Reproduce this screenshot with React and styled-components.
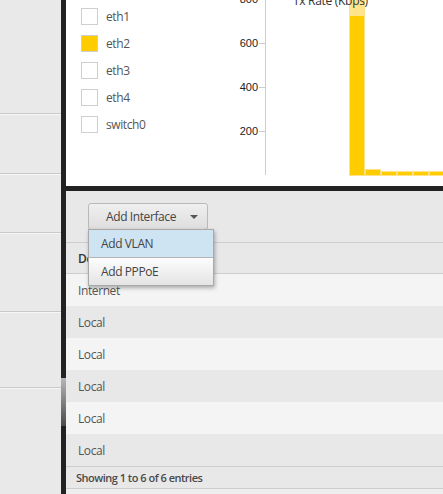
import React from 'react';
import styled, { createGlobalStyle } from 'styled-components';

const Global = createGlobalStyle`
  html, body { margin: 0; padding: 0; }
  body {
    width: 443px;
    height: 494px;
    overflow: hidden;
    font-family: "Open Sans", "Liberation Sans", sans-serif;
    letter-spacing: -0.4px;
    background: #e9e9e9;
  }
`;

const Layout = styled.div`
  display: flex;
  width: 443px;
  height: 494px;
`;

const Sidebar = styled.ul`
  width: 61px;
  margin: 0;
  padding: 0;
  list-style: none;
  background: #e9e9e9;
  display: flex;
  flex-direction: column;
`;

const NavItem = styled.li`
  height: ${p => p.h}px;
  flex: ${p => (p.fill ? 1 : 'none')};
  border-bottom: ${p => (p.fill ? 'none' : '1px solid #c9c9c9')};
  box-shadow: ${p => (p.fill ? 'none' : '0 1px 0 #f6f6f6')};
`;

const Rail = styled.div`
  width: 5px;
  background: #222;
  display: flex;
  flex-direction: column;
`;

const Thumb = styled.div`
  margin-top: 378px;
  height: 48px;
  background: linear-gradient(#b6b6b6, #4a4a4a);
`;

const Main = styled.div`
  flex: 1;
  display: flex;
  flex-direction: column;
  background: #222;
  gap: 5px;
`;

const TopPanel = styled.div`
  height: 186px;
  background: #fff;
  display: flex;
  overflow: hidden;
`;

const Legend = styled.ul`
  width: 149px;
  margin: 0;
  padding: 8px 0 0 15px;
  list-style: none;
  display: flex;
  flex-direction: column;
  gap: 10px;
`;

const LegendItem = styled.li`
  display: flex;
  align-items: center;
  gap: 8px;
  height: 17px;
  font-size: 12px;
  color: #555;
`;

const Swatch = styled.span`
  width: 15px;
  height: 15px;
  border: 1px solid #cfcfcf;
  background: ${p => (p.on ? '#ffcc00' : '#fff')};
`;

const BottomPanel = styled.div`
  flex: 1;
  background: #e8e8e8;
  display: flex;
  flex-direction: column;
`;

const Toolbar = styled.div`
  height: 51px;
  padding: 12px 0 0 22px;
  box-sizing: border-box;
  position: relative;
`;

const DropButton = styled.button`
  box-sizing: border-box;
  width: 120px;
  height: 27px;
  padding: 0 0 0 17px;
  display: flex;
  align-items: center;
  gap: 14px;
  white-space: nowrap;
  border: 1px solid #b9b9b9;
  border-radius: 3px;
  background: linear-gradient(#efefef, #dedede);
  font: 12px "Open Sans", sans-serif;
  letter-spacing: -0.4px;
  color: #444;
  cursor: pointer;
`;

const Caret = styled.span`
  width: 0;
  height: 0;
  border-left: 4px solid transparent;
  border-right: 4px solid transparent;
  border-top: 4px solid #555;
`;

const Menu = styled.ul`
  position: absolute;
  top: 38px;
  left: 22px;
  width: 124px;
  margin: 0;
  padding: 0;
  list-style: none;
  border: 1px solid #a9a9a9;
  background: #fff;
  box-shadow: 1px 2px 4px rgba(0, 0, 0, 0.3);
  z-index: 2;
`;

const MenuItem = styled.li`
  height: 27px;
  padding-left: 12px;
  display: flex;
  align-items: center;
  font-size: 12px;
  color: #444;
  background: ${p => (p.active ? '#cfe4f2' : 'linear-gradient(#fdfdfd, #e4e4e4)')};
  border-top: ${p => (p.active ? 'none' : '1px solid #b4b4b4')};
`;

const Table = styled.div`
  display: flex;
  flex-direction: column;
  border-top: 1px solid #cdcdcd;
`;

const HeadRow = styled.div`
  height: 30px;
  padding-left: 12px;
  display: flex;
  align-items: center;
  font-size: 12px;
  font-weight: 600;
  color: #333;
  border-bottom: 1px solid #cdcdcd;
`;

const Row = styled.div`
  height: 32px;
  padding-left: 12px;
  display: flex;
  align-items: center;
  font-size: 12px;
  color: #555;
  background: ${p => (p.odd ? '#f4f4f4' : '#e8e8e8')};
`;

const Footer = styled.div`
  height: 21px;
  padding-left: 10px;
  display: flex;
  align-items: center;
  font-size: 11px;
  font-weight: 600;
  letter-spacing: -0.5px;
  color: #4a4a4a;
  border-top: 1px solid #cdcdcd;
  border-bottom: 1px solid #cdcdcd;
`;

const Rest = styled.div`
  flex: 1;
  background: #eee;
`;

const ports = ['eth1', 'eth2', 'eth3', 'eth4', 'switch0'];
const rows = ['Internet', 'Local', 'Local', 'Local', 'Local', 'Local'];

// bar chart, x measured from the chart's left edge
const bars = [
  { x: 119, top: 0 },
  { x: 135, top: 169 },
  { x: 151, top: 171 },
  { x: 167, top: 171 },
  { x: 183, top: 171 },
  { x: 199, top: 171 },
];

const RateChart = () => (
  <svg width="213" height="186" style={{ display: 'block', letterSpacing: 0 }}>
    <line x1="35.5" y1="0" x2="35.5" y2="175" stroke="#ccc" />
    {[-1, 43, 87, 131].map(y => (
      <g key={y}>
        <line x1="29" y1={y + 0.5} x2="35" y2={y + 0.5} stroke="#ccc" />
        <text x="28" y={y + 4} textAnchor="end" fontSize="11" fontFamily="Liberation Sans, Arial, sans-serif" fill="#222">
          {Math.round((175 - y) / 44) * 200}
        </text>
      </g>
    ))}
    {bars.map(b => (
      <rect key={b.x} x={b.x + 0.5} y={b.top + 0.5} width="15" height={175 - b.top} fill="#ffcc00" stroke="#ffe38a" />
    ))}
    <rect x="119.5" y="0" width="15" height="16" fill="#ffe48c" />
    <text x="63" y="5" fontSize="12" fill="#333" fontFamily="Open Sans, sans-serif" letterSpacing="-0.3">Tx Rate (Kbps)</text>
  </svg>
);

export default function App() {
  return (
    <>
      <Global />
      <Layout>
        <Sidebar>
          <NavItem h={113} />
          <NavItem h={59} />
          <NavItem h={58} />
          <NavItem h={78} />
          <NavItem h={75} />
          <NavItem fill />
        </Sidebar>
        <Rail>
          <Thumb />
        </Rail>
        <Main>
          <TopPanel>
            <Legend>
              {ports.map(p => (
                <LegendItem key={p}>
                  <Swatch on={p === 'eth2'} />
                  {p}
                </LegendItem>
              ))}
            </Legend>
            <RateChart />
          </TopPanel>
          <BottomPanel>
            <Toolbar>
              <DropButton>
                Add Interface
                <Caret />
              </DropButton>
              <Menu>
                <MenuItem active>Add VLAN</MenuItem>
                <MenuItem>Add PPPoE</MenuItem>
              </Menu>
            </Toolbar>
            <Table>
              <HeadRow>Description</HeadRow>
              {rows.map((r, i) => (
                <Row key={i} odd={i % 2 === 0}>{r}</Row>
              ))}
              <Footer>Showing 1 to 6 of 6 entries</Footer>
            </Table>
            <Rest />
          </BottomPanel>
        </Main>
      </Layout>
    </>
  );
}
